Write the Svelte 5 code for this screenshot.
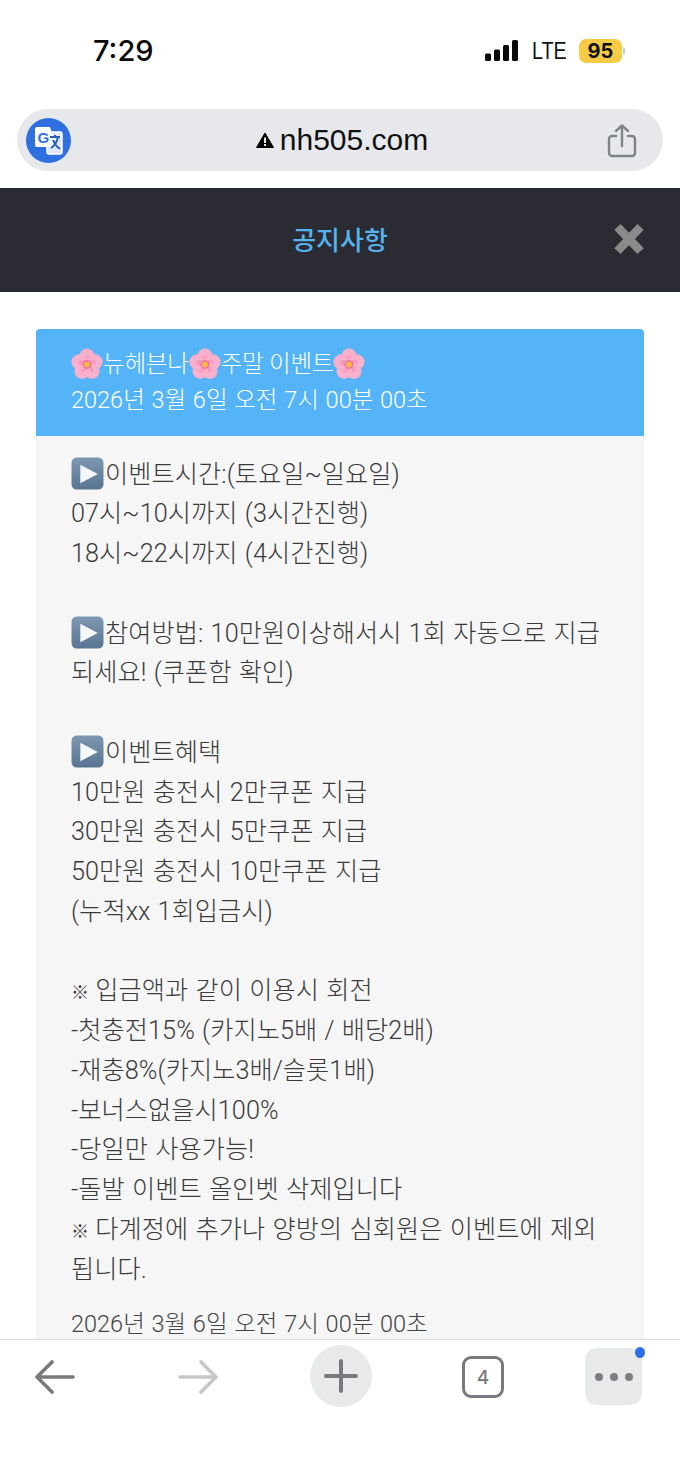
<script>
  const sections = [
    ['@이벤트시간:(토요일~일요일)', '07시~10시까지 (3시간진행)', '18시~22시까지 (4시간진행)'],
    ['@참여방법: 10만원이상해서시 1회 자동으로 지급', '되세요! (쿠폰함 확인)'],
    ['@이벤트혜택', '10만원 충전시 2만쿠폰 지급', '30만원 충전시 5만쿠폰 지급', '50만원 충전시 10만쿠폰 지급', '(누적xx 1회입금시)'],
    ['※입금액과 같이 이용시 회전', '-첫충전15% (카지노5배 / 배당2배)', '-재충8%(카지노3배/슬롯1배)', '-보너스없을시100%', '-당일만 사용가능!', '-돌발 이벤트 올인벳 삭제입니다', '※다계정에 추가나 양방의 심회원은 이벤트에 제외', '됩니다.']
  ];
  const petals = [0, 72, 144, 216, 288];
</script>

{#snippet flower()}
  <svg class="flower" viewBox="0 0 32 32">
    {#each petals as a}
      <g transform="rotate({a} 16 16)">
        <ellipse cx="16" cy="8" rx="7.6" ry="8" fill="#f9b0cd" />
        <ellipse cx="16" cy="11" rx="3" ry="4" fill="#f59abd" />
      </g>
    {/each}
    <circle cx="16" cy="16" r="4.6" fill="#ee7aa0" />
    <circle cx="16" cy="16" r="2.8" fill="#f6b93f" />
  </svg>
{/snippet}

{#snippet play()}
  <svg class="play" viewBox="0 0 32 32">
    <defs>
      <linearGradient id="pg" x1="0" y1="0" x2="0" y2="1">
        <stop offset="0" stop-color="#7f98b2" />
        <stop offset="1" stop-color="#587490" />
      </linearGradient>
    </defs>
    <rect x="0.5" y="0.5" width="31" height="31" rx="5" fill="url(#pg)" />
    <path d="M9 7.5 L26 16.5 L9 25.5 Z" fill="#f4f6f8" />
  </svg>
{/snippet}

<div class="phone">
  <div class="status">
    <span class="time">7:29</span>
    <div class="status-right">
      <svg class="signal" width="33" height="21" viewBox="0 0 33 21">
        <rect x="0" y="13.5" width="6" height="7.5" rx="1.5" />
        <rect x="9" y="9.5" width="6" height="11.5" rx="1.5" />
        <rect x="18" y="5" width="6" height="16" rx="1.5" />
        <rect x="27" y="0" width="6" height="21" rx="1.5" />
      </svg>
      <span class="lte">LTE</span>
      <span class="battery">95</span>
      <span class="nub"></span>
    </div>
  </div>

  <div class="urlwrap">
    <div class="urlbar">
      <span class="translate">
        <svg width="45" height="45" viewBox="0 0 45 45">
          <rect x="21" y="14" width="15" height="22" rx="2" fill="#dfe8fa" stroke="#fff" stroke-width="1.5" />
          <path d="M11 9 H24 L31 29 H11 a2 2 0 0 1 -2 -2 V11 a2 2 0 0 1 2 -2 Z" fill="#fff" />
          <text x="11.5" y="25" class="g">G</text>
          <path d="M24 19 H34 M29 17 V19 M32 19 C31 24 28 28 25 30 M27 22 C28.5 26 31 29 34 31" stroke="#2b5fb8" stroke-width="2" fill="none" />
        </svg>
      </span>
      <div class="address">
        <svg width="18" height="16" viewBox="0 0 18 16">
          <path d="M9 1 L17.5 15.5 H0.5 Z" fill="#000" stroke="#000" stroke-linejoin="round" />
          <rect x="8" y="5.5" width="2" height="5.5" fill="#e6e8eb" />
          <rect x="8" y="12" width="2" height="2" fill="#e6e8eb" />
        </svg>
        <span>nh505.com</span>
      </div>
      <svg class="share" width="30" height="34" viewBox="0 0 30 34" fill="none" stroke="#808487" stroke-width="2.4" stroke-linecap="round" stroke-linejoin="round">
        <path d="M9 12 H5 a3 3 0 0 0 -3 3 V29 a3 3 0 0 0 3 3 H25 a3 3 0 0 0 3 -3 V15 a3 3 0 0 0 -3 -3 H21" />
        <path d="M15 22 V2 M9 7 L15 1.5 L21 7" />
      </svg>
    </div>
  </div>

  <header class="top">
    <h1>공지사항</h1>
    <svg class="close" width="30" height="32" viewBox="0 0 30 32">
      <path d="M5 5.5 L25 26.5 M25 5.5 L5 26.5" stroke="#8a8a8a" stroke-width="10" stroke-linecap="square" transform="translate(15 16) scale(0.86) translate(-15 -16)" />
    </svg>
  </header>

  <main class="content">
    <section class="card">
      <div class="card-head">
        <div class="title">{@render flower()}<span>뉴헤븐나</span>{@render flower()}<span>주말 이벤트</span>{@render flower()}</div>
        <div class="date">2026년 3월 6일 오전 7시 00분 00초</div>
      </div>
      <div class="card-body">
        {#each sections as lines}
          <div class="block">
            {#each lines as line}
              <div class="line">
                {#if line.startsWith('@')}
                  {@render play()}{line.slice(1)}
                {:else if line.startsWith('※')}
                  <span class="mark">※</span> {line.slice(1)}
                {:else}
                  {line}
                {/if}
              </div>
            {/each}
          </div>
        {/each}
        <div class="foot">2026년 3월 6일 오전 7시 00분 00초</div>
      </div>
    </section>
  </main>

  <nav class="toolbar">
    <svg class="back" width="40" height="34" viewBox="0 0 40 34" fill="none" stroke="#77797c" stroke-width="3.6" stroke-linecap="round" stroke-linejoin="round">
      <path d="M38 17 H2 M17 2 L2 17 L17 32" />
    </svg>
    <svg class="forward" width="40" height="34" viewBox="0 0 40 34" fill="none" stroke="#c6c7c9" stroke-width="3.6" stroke-linecap="round" stroke-linejoin="round">
      <path d="M2 17 H38 M23 2 L38 17 L23 32" />
    </svg>
    <span class="plus">
      <svg width="34" height="34" viewBox="0 0 34 34" stroke="#77797c" stroke-width="4" stroke-linecap="round">
        <path d="M17 2 V32 M2 17 H32" />
      </svg>
    </span>
    <span class="tabs">4</span>
    <span class="more">
      <i></i><i></i><i></i>
      <b></b>
    </span>
  </nav>
</div>

<style>
  :global(body) {
    margin: 0;
    background: #fff;
  }

  .phone {
    width: 680px;
    height: 1474px;
    display: flex;
    flex-direction: column;
    overflow: hidden;
    font-family: "Liberation Sans", "Noto Sans CJK KR", sans-serif;
    background: #fff;
  }

  .status {
    height: 109px;
    flex: none;
    display: flex;
    justify-content: space-between;
    align-items: flex-start;
    padding: 32px 55px 0 93px;
    box-sizing: border-box;
  }

  .time {
    font-family: Inter, sans-serif;
    font-size: 29px;
    font-weight: 500;
    line-height: 38px;
    color: #0a0a0a;
  }

  .status-right {
    display: flex;
    align-items: center;
    height: 38px;
  }

  .signal {
    fill: #0a0a0a;
    margin: -2px 14px 0 0;
  }

  .lte {
    font-family: "Liberation Sans", sans-serif;
    font-size: 24px;
    color: #111;
    width: 47px;
    white-space: nowrap;
    transform: scaleX(0.82);
    transform-origin: left;
  }

  .battery {
    width: 43px;
    height: 24px;
    border-radius: 7px;
    background: #f6cb45;
    font-family: Inter, sans-serif;
    font-size: 20px;
    font-weight: 700;
    color: #111;
    text-align: center;
    line-height: 24px;
  }

  .nub {
    width: 2px;
    height: 8px;
    margin-left: 1px;
    background: #ccc;
    border-radius: 0 2px 2px 0;
  }

  .urlwrap {
    height: 79px;
    flex: none;
    padding: 0 17px;
    box-sizing: border-box;
  }

  .urlbar {
    height: 62px;
    border-radius: 31px;
    background: #e6e8eb;
    position: relative;
    display: flex;
    align-items: center;
    justify-content: center;
  }

  .translate {
    position: absolute;
    left: 9px;
    top: 9px;
    width: 45px;
    height: 45px;
    border-radius: 50%;
    background: #2f70e0;
  }

  .translate svg {
    display: block;
  }

  .g {
    font-family: "Liberation Sans", sans-serif;
    font-size: 15px;
    font-weight: 700;
    fill: #2f70e0;
  }

  .address {
    display: flex;
    align-items: center;
    gap: 6px;
    padding-left: 4px;
    font-family: "Liberation Sans", sans-serif;
    font-size: 30px;
    color: #111;
  }

  .share {
    position: absolute;
    right: 26px;
    top: 15px;
  }

  .top {
    height: 104px;
    flex: none;
    background: #2b2c33;
    position: relative;
    display: flex;
    align-items: center;
    justify-content: center;
  }

  .top h1 {
    margin: 0 0 4px;
    font-size: 26px;
    font-weight: 500;
    color: #55b3ed;
  }

  .close {
    position: absolute;
    right: 36px;
    top: 35px;
  }

  .content {
    flex: 1;
    min-height: 0;
    overflow: hidden;
    padding: 37px 36px 0;
  }

  .card {
    border-radius: 4px 4px 0 0;
    overflow: hidden;
    background: #f6f6f6;
  }

  .card-head {
    height: 107px;
    box-sizing: border-box;
    padding: 18px 35px 0;
    background: #54b4f7;
    color: #fff;
    font-family: Roboto, "Noto Sans CJK KR", sans-serif;
    font-weight: 300;
    font-size: 23.5px;
    line-height: 35px;
  }

  .title {
    display: flex;
    align-items: center;
    letter-spacing: -0.2px;
  }

  .date {
    margin-top: 1px;
    word-spacing: 1px;
  }

  .flower {
    width: 32px;
    height: 33px;
    flex: none;
  }

  .card-body {
    padding: 18.5px 35px 0;
    color: #3a3a3a;
    font-family: Roboto, "Noto Sans CJK KR", sans-serif;
    font-size: 25.2px;
    font-weight: 300;
    line-height: 39.75px;
    letter-spacing: 0.08px;
    word-spacing: 1px;
  }

  .block {
    margin-bottom: 39.75px;
  }

  .block:nth-last-child(2) {
    margin-bottom: 0;
  }

  .line {
    height: 39.75px;
    white-space: nowrap;
  }

  .mark {
    font-size: 18px;
    line-height: 1;
    font-weight: 500;
    margin-right: -1px;
  }

  .play {
    width: 33px;
    height: 33px;
    vertical-align: -7px;
    margin-right: 1px;
  }

  .foot {
    margin-top: 18px;
    font-size: 23.5px;
    line-height: 35px;
    letter-spacing: 0;
    color: #444;
  }

  .toolbar {
    height: 135px;
    flex: none;
    box-sizing: border-box;
    border-top: 1px solid #dcdcdc;
    background: #fff;
    display: flex;
    align-items: flex-start;
    padding-top: 5px;
  }

  .back {
    margin: 15px 0 0 35px;
  }

  .forward {
    margin: 15px 0 0 103px;
  }

  .plus {
    width: 62px;
    height: 62px;
    margin-left: 92px;
    border-radius: 50%;
    background: #e7e9eb;
    display: flex;
    align-items: center;
    justify-content: center;
  }

  .tabs {
    box-sizing: border-box;
    width: 42px;
    height: 42px;
    margin: 11px 0 0 90px;
    border: 3.5px solid #77797c;
    border-radius: 9px;
    font-family: Inter, sans-serif;
    font-size: 19px;
    font-weight: 500;
    color: #77797c;
    text-align: center;
    line-height: 37px;
  }

  .more {
    width: 57px;
    height: 57px;
    margin: 3px 0 0 81px;
    border-radius: 12px;
    background: #e7e9eb;
    position: relative;
    display: flex;
    align-items: center;
    justify-content: center;
    gap: 7px;
  }

  .more i {
    width: 8px;
    height: 8px;
    border-radius: 50%;
    background: #7c7e82;
  }

  .more b {
    position: absolute;
    right: -3px;
    top: -1px;
    width: 10px;
    height: 11px;
    border-radius: 50%;
    background: #2a6fe6;
  }
</style>
